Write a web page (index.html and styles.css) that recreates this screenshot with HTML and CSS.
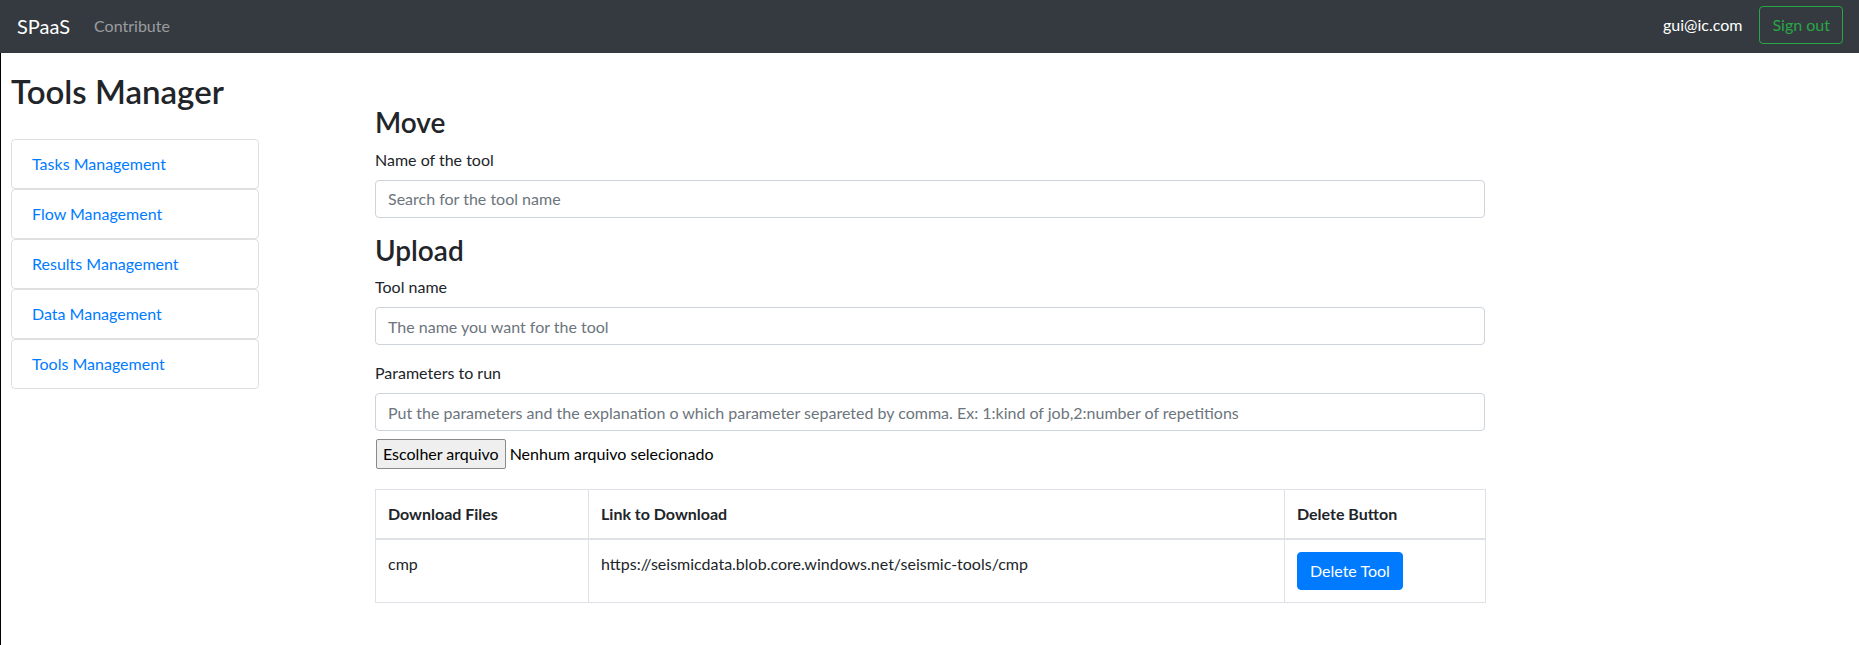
FILE: index.html
```html
<!DOCTYPE html>
<html lang="en">
<head>
<meta charset="utf-8">
<title>SPaaS - Tools Manager</title>
<link rel="stylesheet" href="styles.css">
</head>
<body>
<nav class="navbar">
  <a class="brand" href="#">SPaaS</a>
  <a class="nav-link" href="#">Contribute</a>
  <div class="nav-right">
    <span class="user">gui@ic.com</span>
    <button class="btn-signout" type="button">Sign out</button>
  </div>
</nav>
<div class="page">
  <aside class="sidebar">
    <h2 class="sidebar-title">Tools Manager</h2>
    <ul class="side-list">
      <li class="side-item"><a href="#">Tasks Management</a></li>
      <li class="side-item"><a href="#">Flow Management</a></li>
      <li class="side-item"><a href="#">Results Management</a></li>
      <li class="side-item"><a href="#">Data Management</a></li>
      <li class="side-item"><a href="#">Tools Management</a></li>
    </ul>
  </aside>
  <main class="content">
    <h3 class="section-title">Move</h3>
    <div class="form-group">
      <label class="form-label">Name of the tool</label>
      <input class="form-control" type="text" placeholder="Search for the tool name">
    </div>
    <h3 class="section-title">Upload</h3>
    <div class="form-group">
      <label class="form-label">Tool name</label>
      <input class="form-control" type="text" placeholder="The name you want for the tool">
    </div>
    <div class="form-group form-group-tight">
      <label class="form-label">Parameters to run</label>
      <input class="form-control" type="text" placeholder="Put the parameters and the explanation o which parameter separeted by comma. Ex: 1:kind of job,2:number of repetitions">
    </div>
    <div class="file-row">
      <span class="file-btn">Escolher arquivo</span>
      <span class="file-text">Nenhum arquivo selecionado</span>
    </div>
    <table class="tools-table">
      <colgroup>
        <col class="col-file">
        <col class="col-link">
        <col class="col-del">
      </colgroup>
      <thead>
        <tr>
          <th>Download Files</th>
          <th>Link to Download</th>
          <th>Delete Button</th>
        </tr>
      </thead>
      <tbody>
        <tr>
          <td>cmp</td>
          <td>https://seismicdata.blob.core.windows.net/seismic-tools/cmp</td>
          <td><button class="btn-delete" type="button">Delete Tool</button></td>
        </tr>
      </tbody>
    </table>
  </main>
</div>
</body>
</html>
```

FILE: styles.css
```css
* {
  box-sizing: border-box;
}

html, body {
  margin: 0;
  padding: 0;
}

body {
  font-family: Lato, "Noto Sans", sans-serif;
  font-size: 16px;
  line-height: 1.5;
  color: #212529;
  background: #fff;
  min-height: 645px;
}

a {
  text-decoration: none;
}

/* ---------- navbar ---------- */
.navbar {
  height: 53px;
  background: #343a40;
  display: flex;
  align-items: center;
  padding: 0 16px 0 17px;
}

.brand {
  color: #fff;
  font-size: 20px;
  line-height: 30px;
  margin-right: 16px;
  margin-top: -2px;
}

.nav-link {
  color: rgba(255, 255, 255, 0.5);
  padding: 0 8px;
  line-height: 24px;
  margin-top: -2px;
}

.nav-right {
  margin-left: auto;
  display: flex;
  align-items: center;
  gap: 17px;
  margin-top: -3px;
}

.user {
  color: #fff;
  line-height: 24px;
}

.btn-signout {
  font-family: inherit;
  font-size: 16px;
  line-height: 24px;
  height: 38px;
  padding: 6px 12px;
  color: #28a745;
  background: transparent;
  border: 1px solid #28a745;
  border-radius: 4px;
}

/* ---------- page ---------- */
.page {
  display: flex;
  align-items: flex-start;
  border-left: 1px solid #000;
  min-height: 592px;
}

.sidebar {
  width: 258px;
  padding: 19px 0 0 10px;
  flex-shrink: 0;
}

.sidebar-title {
  margin: 0 0 29px;
  font-size: 33px;
  line-height: 38px;
  font-weight: 600;
}

.side-list {
  list-style: none;
  margin: 0;
  padding: 0;
}

.side-item {
  height: 50px;
  padding: 12px 20px;
  border: 1px solid rgba(0, 0, 0, 0.125);
  border-radius: 4px;
  line-height: 24px;
}

.side-item a {
  color: #007bff;
}

/* ---------- content ---------- */
.content {
  margin-left: 116px;
  width: 1110px;
  padding-top: 53px;
}

.section-title {
  margin: 0 0 8px;
  font-size: 28px;
  line-height: 33.6px;
  font-weight: 600;
}

.form-group {
  margin-bottom: 16px;
}

.form-group-tight {
  margin-bottom: 8px;
}

.form-label {
  display: block;
  margin-bottom: 8px;
  line-height: 24px;
}

.form-control {
  display: block;
  width: 100%;
  height: 38px;
  padding: 6px 12px;
  font-family: inherit;
  font-size: 16px;
  line-height: 24px;
  color: #495057;
  background: #fff;
  border: 1px solid #ced4da;
  border-radius: 4px;
}

.form-control::placeholder {
  color: #6c757d;
  opacity: 1;
}

.file-row {
  display: flex;
  align-items: center;
  gap: 4px;
  height: 30px;
  margin-left: 1px;
}

.file-btn {
  display: inline-block;
  height: 30px;
  padding: 2px 6px;
  line-height: 24px;
  background: #efefef;
  border: 1px solid #8a8a8a;
  border-radius: 2px;
  color: #000;
}

.file-text {
  color: #000;
}

/* ---------- table ---------- */
.tools-table {
  margin-top: 20px;
  width: 1110px;
  border-collapse: collapse;
  table-layout: fixed;
}

.col-file {
  width: 213px;
}

.col-link {
  width: 696px;
}

.col-del {
  width: 201px;
}

.tools-table th,
.tools-table td {
  border: 1px solid #dee2e6;
  padding: 12px;
  text-align: left;
  line-height: 24px;
  vertical-align: top;
}

.tools-table th {
  font-weight: 700;
  vertical-align: bottom;
  border-bottom: 2px solid #dee2e6;
}

.btn-delete {
  font-family: inherit;
  font-size: 16px;
  line-height: 24px;
  height: 38px;
  padding: 6px 12px;
  color: #fff;
  background: #007bff;
  border: 1px solid #007bff;
  border-radius: 4px;
}
```
